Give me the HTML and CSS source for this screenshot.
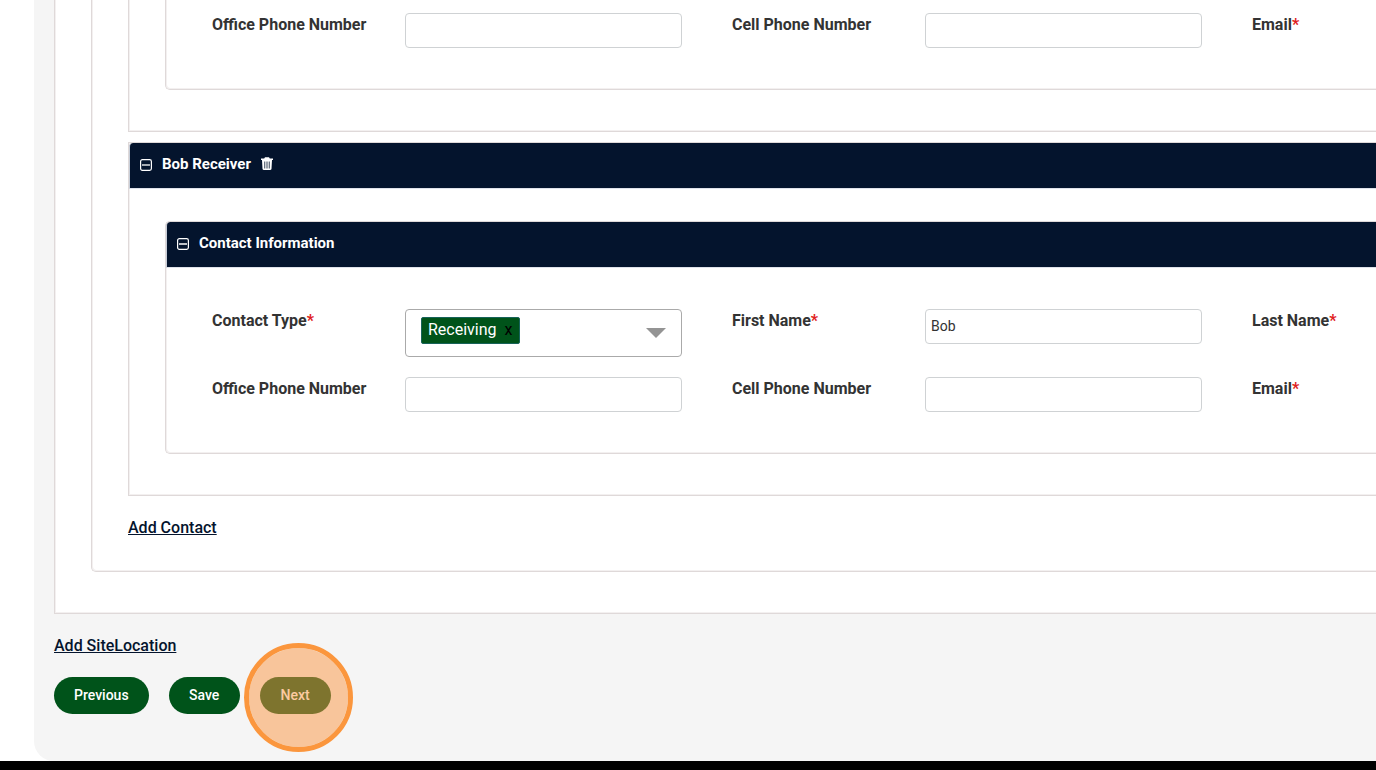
FILE: index.html
```html
<!DOCTYPE html>
<html lang="en">
<head>
<meta charset="utf-8">
<meta name="viewport" content="width=device-width, initial-scale=1">
<title>Site Contacts</title>
<link rel="stylesheet" href="styles.css">
</head>
<body>
<main class="page">
  <section class="panel panel-site">
    <div class="panel panel-contacts">
      <section class="panel contact contact-first">
        <div class="panel info">
          <div class="fields fields-first">
            <div class="field"><label for="office1">Office Phone Number</label><input id="office1" type="tel"></div>
            <div class="field"><label for="cell1">Cell Phone Number</label><input id="cell1" type="tel"></div>
            <div class="field"><label for="email1">Email<span class="required">*</span></label><input id="email1" type="email"></div>
          </div>
        </div>
      </section>

      <section class="panel contact">
        <header class="bar">
          <button class="icon-button" type="button" aria-label="Collapse contact">
            <svg width="12" height="12" viewBox="0 0 12 12" fill="none" stroke="currentColor"><rect x=".6" y=".6" width="10.800" height="10.800" rx="1.800" stroke-width="1.200"/><path d="M2 6h8" stroke-width="1.300"/></svg>
          </button>
          <h2>Bob Receiver</h2>
          <button class="icon-button trash" type="button" aria-label="Delete contact">
            <svg width="12" height="13" viewBox="0 0 12 13"><path fill="currentColor" fill-rule="evenodd" d="M0 1.500h3.200L4 .2h4l.8 1.300H12V3H0zM1 3h10l-.5 8.800c0 .7-.5 1.200-1.200 1.200H2.700c-.7 0-1.200-.5-1.200-1.200zM3.400 4.500v7h.8v-7zM5.600 4.500v7h.8v-7zM7.800 4.500v7h.8v-7z"/></svg>
          </button>
        </header>
        <div class="panel info">
          <header class="bar">
            <button class="icon-button" type="button" aria-label="Collapse contact information">
              <svg width="12" height="12" viewBox="0 0 12 12" fill="none" stroke="currentColor"><rect x=".6" y=".6" width="10.800" height="10.800" rx="1.800" stroke-width="1.200"/><path d="M2 6h8" stroke-width="1.300"/></svg>
            </button>
            <h3>Contact Information</h3>
          </header>
          <div class="fields">
            <div class="field">
              <label id="type-label" for="type-toggle">Contact Type<span class="required">*</span></label>
              <div class="multi-select" role="group" aria-labelledby="type-label">
                <span class="tag">Receiving <button class="tag-remove" type="button" aria-label="Remove Receiving">x</button></span>
                <button class="toggle" id="type-toggle" type="button" aria-haspopup="listbox">
                  <svg width="20" height="10" viewBox="0 0 20 10"><path fill="currentColor" d="M0 0h20L10 10z"/></svg>
                </button>
              </div>
            </div>
            <div class="field"><label for="first">First Name<span class="required">*</span></label><input id="first" type="text" value="Bob"></div>
            <div class="field"><label for="last">Last Name<span class="required">*</span></label><input id="last" type="text"></div>
            <div class="field"><label for="office2">Office Phone Number</label><input id="office2" type="tel"></div>
            <div class="field"><label for="cell2">Cell Phone Number</label><input id="cell2" type="tel"></div>
            <div class="field"><label for="email2">Email<span class="required">*</span></label><input id="email2" type="email"></div>
          </div>
        </div>
      </section>
      <a class="add-link" href="#add-contact">Add Contact</a>
    </div>
  </section>
  <a class="add-link" href="#add-site">Add SiteLocation</a>
  <div class="actions">
    <button class="button" type="button">Previous</button>
    <button class="button" type="button">Save</button>
    <div class="highlighted"><button class="button" type="button">Next</button><span class="ring"></span></div>
  </div>
</main>
</body>
</html>
```

FILE: styles.css
```css
* {
  box-sizing: border-box;
}

body {
  margin: 0;
  background: #fff;
  border-bottom: 9px solid #000;
  color: #333;
  font: 16px/24px Roboto, "Liberation Sans", sans-serif;
  overflow-x: hidden;
}

button,
input {
  font: inherit;
}

.page {
  margin-left: 34px;
  padding: 0 0 47px 20px;
  background: #f5f5f5;
  border-bottom-left-radius: 20px;
}

.panel {
  border: 1px solid #dfd9d9;
  border-right: 0;
  background: #fff;
  box-shadow: inset 1px -1px #f3f0f0;
}

.panel-site {
  margin-bottom: 20px;
  padding: 0 0 41px 36px;
  border-top: 0;
}

.panel-contacts {
  padding: 0 0 31px 36px;
  border-top: 0;
  border-bottom-left-radius: 5px;
}

.contact {
  margin-bottom: 20px;
  padding-bottom: 41px;
}

.contact-first {
  margin-bottom: 10px;
  border-top: 0;
}

.info {
  margin-left: 36px;
  border-radius: 5px 0 0 5px;
  overflow: hidden;
}

.contact-first .info {
  border-top: 0;
  border-top-left-radius: 0;
}

.bar {
  display: flex;
  align-items: center;
  height: 46px;
  padding: 0 0 4px 10px;
  border-bottom: 1px solid #dfe2ea;
  border-left: 1px solid #c8ced8;
  border-top-left-radius: 4px;
  background: #04142d;
  color: #fff;
}

.bar + .info {
  margin-top: 32px;
}

.bar h2,
.bar h3 {
  margin: 0 0 0 10px;
  font-size: 15px;
  font-weight: 700;
  line-height: 20px;
}

.icon-button {
  display: flex;
  padding: 2px 0 0;
  border: 0;
  background: none;
  color: inherit;
}

.trash {
  margin-left: 10px;
  padding: 0;
}

.fields {
  display: grid;
  grid-template-columns: repeat(3, 470px);
  gap: 20px 50px;
  padding: 41px 0 41px 46px;
}

.fields-first {
  padding-top: 13px;
}

.field {
  display: grid;
  grid-template-columns: 193px 1fr;
  align-items: start;
}

.field label {
  font-weight: 700;
}

.required {
  color: #e02020;
}

.field input {
  width: 100%;
  height: 35px;
  padding: 0 5px 2px;
  border: 1px solid #cfd2d4;
  border-radius: 4px;
  background: #fff;
  color: #333;
  font-size: 14px;
}

.multi-select {
  display: flex;
  align-items: flex-start;
  justify-content: space-between;
  height: 48px;
  padding: 7px 15px;
  border: 1px solid #aaa;
  border-radius: 4px;
}

.tag {
  display: flex;
  gap: 8px;
  padding: 0 6px 2px;
  border: 1px solid #176359;
  border-radius: 2px;
  background: #00531a;
  color: #fff;
  line-height: 23px;
}

.tag-remove {
  padding: 0;
  border: 0;
  background: none;
  color: #000;
  line-height: 23px;
}

.toggle {
  display: flex;
  align-self: center;
  padding: 0;
  border: 0;
  background: none;
  color: #949494;
}

.add-link {
  display: table;
  color: #04142d;
  font-weight: 500;
  text-decoration: underline;
}

.actions {
  display: flex;
  gap: 20px;
  margin-top: 19px;
}

.button {
  min-width: 71px;
  height: 37px;
  padding: 0 20px 2px;
  border: 0;
  border-radius: 19px;
  background: #00531a;
  color: #fff;
  font-size: 14px;
  font-weight: 500;
}

.highlighted {
  position: relative;
}

.ring {
  position: absolute;
  top: -34px;
  left: -16px;
  width: 109px;
  height: 109px;
  border: 5px solid #fb963d;
  border-radius: 50%;
  background: rgba(252, 150, 66, 0.5);
  background-clip: padding-box;
  pointer-events: none;
}
```
